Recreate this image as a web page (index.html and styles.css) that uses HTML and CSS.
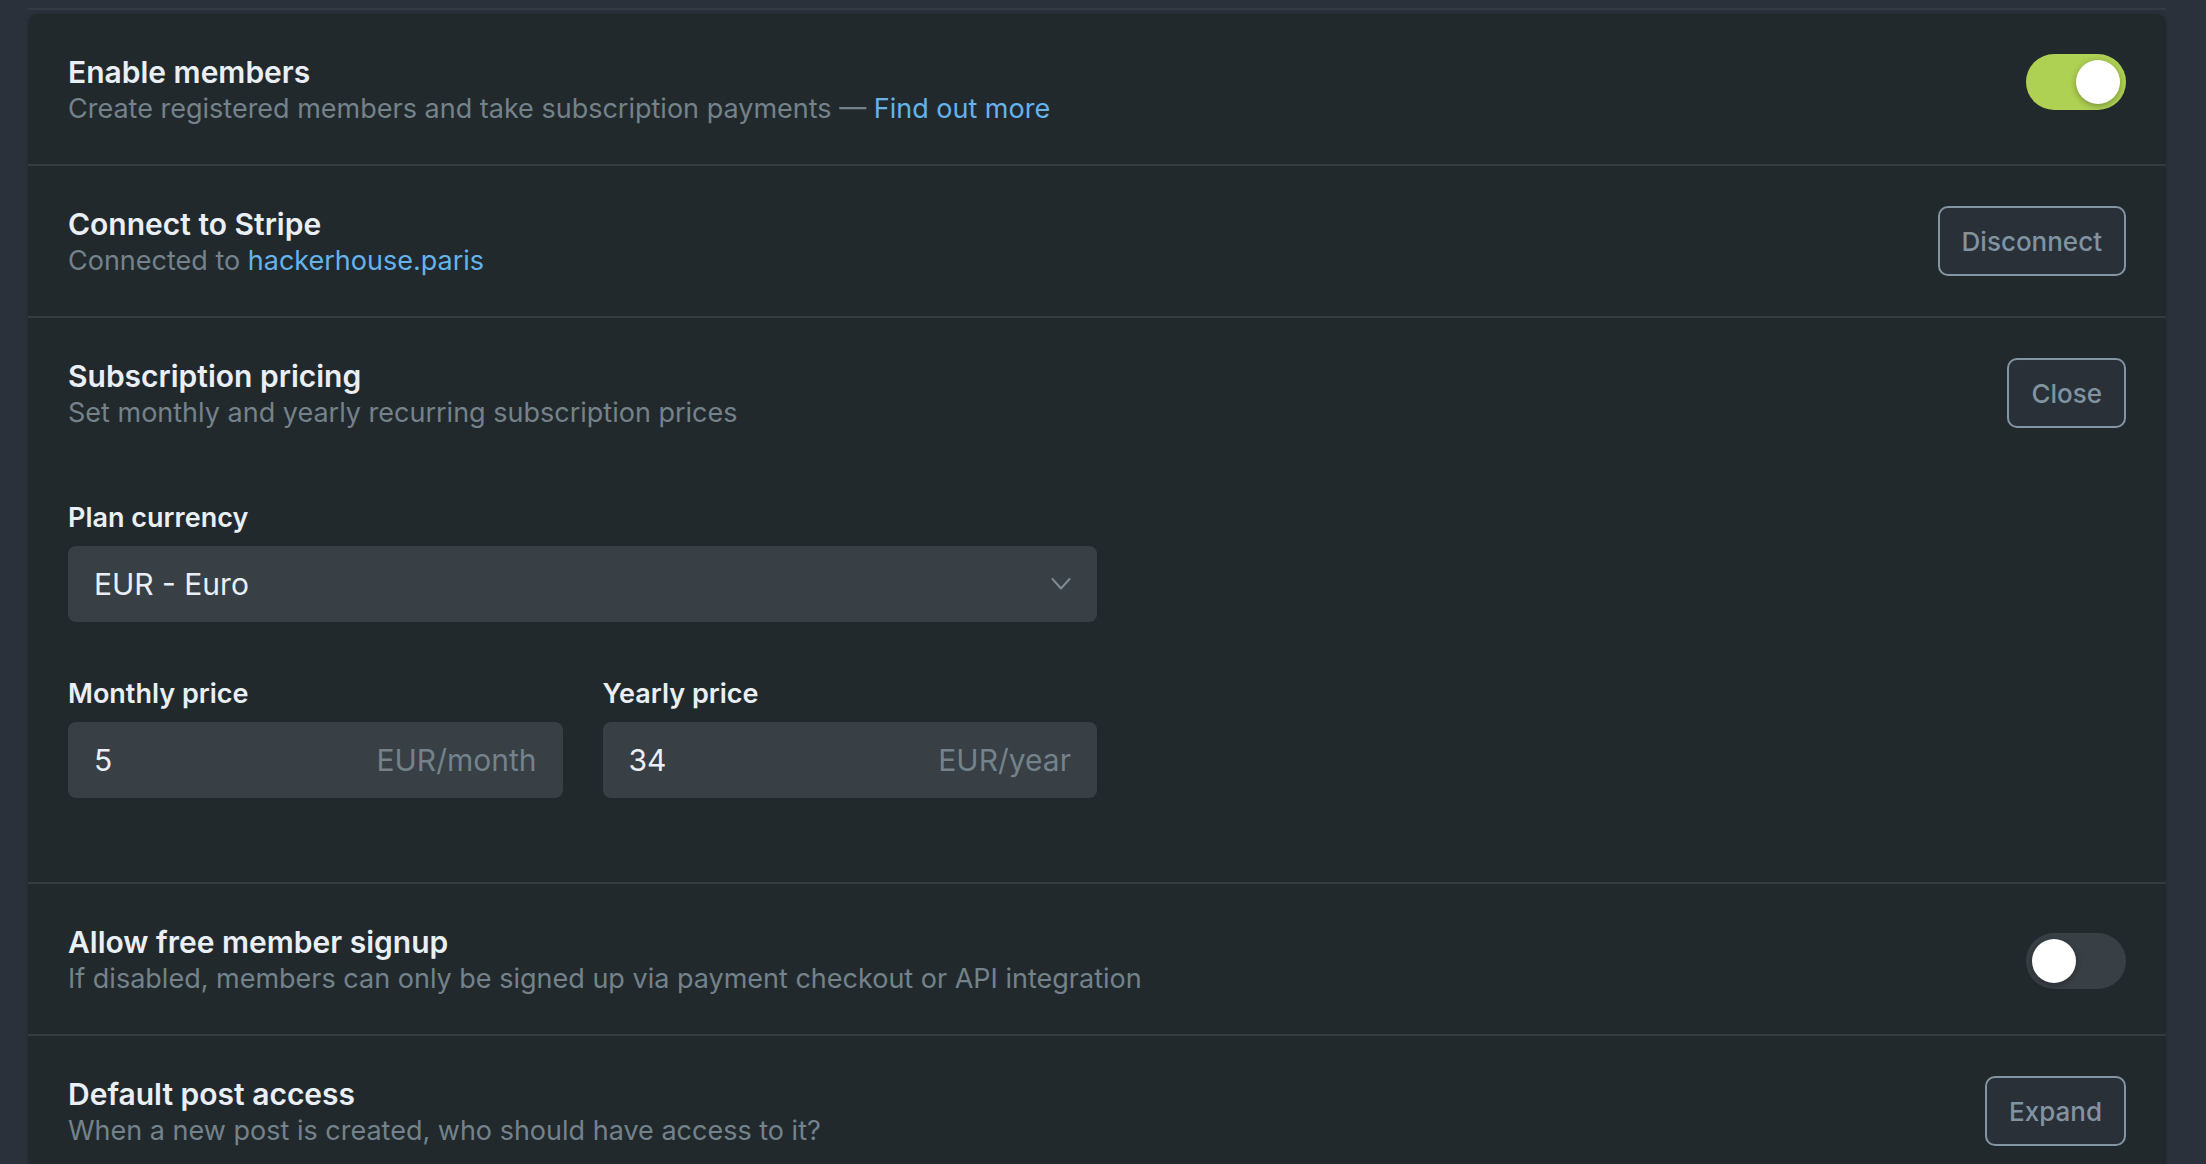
FILE: index.html
```
<!DOCTYPE html>
<html lang="en">
<head>
    <meta charset="UTF-8">
    <meta name="viewport" content="width=device-width, initial-scale=1.0">
    <title>Members settings</title>
    <link rel="stylesheet" href="styles.css">
</head>
<body>
    <main class="settings">
        <section class="panel">
            <div class="row">
                <div class="row-text">
                    <h4 id="membersTitle">Enable members</h4>
                    <p>Create registered members and take subscription payments — <a href="#">Find out more</a></p>
                </div>
                <input type="checkbox" class="switch" aria-labelledby="membersTitle" checked>
            </div>

            <div class="row">
                <div class="row-text">
                    <h4>Connect to Stripe</h4>
                    <p>Connected to <a href="#">hackerhouse.paris</a></p>
                </div>
                <button type="button" class="btn">Disconnect</button>
            </div>

            <!-- expanded section -->
            <div class="row">
                <div class="row-text">
                    <h4>Subscription pricing</h4>
                    <p>Set monthly and yearly recurring subscription prices</p>
                </div>
                <button type="button" class="btn">Close</button>
            </div>
            <form class="pricing">
                <div class="field field-wide">
                    <label for="currency">Plan currency</label>
                    <div class="control">
                        <select id="currency">
                            <option selected>EUR - Euro</option>
                            <option>USD - US Dollar</option>
                            <option>GBP - British Pound</option>
                        </select>
                        <svg class="arrow" viewBox="0 0 20 12" aria-hidden="true">
                            <path d="M1.5 1 10 10.5 18.5 1"/>
                        </svg>
                    </div>
                </div>
                <div class="field">
                    <label for="monthly">Monthly price</label>
                    <div class="control">
                        <input type="text" id="monthly" value="5">
                        <span class="unit">EUR/month</span>
                    </div>
                </div>
                <div class="field">
                    <label for="yearly">Yearly price</label>
                    <div class="control">
                        <input type="text" id="yearly" value="34">
                        <span class="unit">EUR/year</span>
                    </div>
                </div>
            </form>

            <div class="row row-center">
                <div class="row-text">
                    <h4 id="signupTitle">Allow free member signup</h4>
                    <p>If disabled, members can only be signed up via payment checkout or API integration</p>
                </div>
                <input type="checkbox" class="switch" aria-labelledby="signupTitle">
            </div>

            <div class="row">
                <div class="row-text">
                    <h4>Default post access</h4>
                    <p>When a new post is created, who should have access to it?</p>
                </div>
                <button type="button" class="btn">Expand</button>
            </div>
        </section>
    </main>
</body>
</html>
```
FILE: styles.css
```
* {
    box-sizing: border-box;
}

body {
    margin: 0;
    height: 100vh;
    overflow: hidden;
    background-color: #2a313a;
    color: #e9eff5;
    font-family: Inter, "Liberation Sans", sans-serif;
    font-size: 27px;
    line-height: 36px;
}

.settings {
    margin: 8px 40px 0 28px;
    padding-top: 4px;
    border-top: 2px solid #343c43;
}

.panel {
    background-color: #22292c;
    border-radius: 10px;
    box-shadow: 0 0 3px rgba(34, 41, 44, 0.8);
}

.row {
    display: flex;
    justify-content: space-between;
    align-items: flex-start;
    gap: 40px;
    padding: 40px 40px 36px;
}

.row-center {
    align-items: center;
}

.row + .row,
.pricing + .row {
    border-top: 2px solid #343c3f;
}

h4 {
    margin: 0;
    font-size: 30px;
    font-weight: 600;
}

p {
    margin: 0;
    color: #73828b;
    line-height: 38px;
}

a {
    color: #64b3ec;
    text-decoration: none;
}

.btn {
    height: 70px;
    padding: 0 22px;
    border: 2px solid #8395a3;
    border-radius: 10px;
    background-color: #293038;
    color: #8193a0;
    font-family: inherit;
    font-size: 26px;
    font-weight: 500;
    cursor: pointer;
}

.switch {
    appearance: none;
    flex-shrink: 0;
    width: 100px;
    height: 56px;
    margin: 0;
    padding: 6px;
    border-radius: 28px;
    background-color: #383f45;
    cursor: pointer;
}

.switch::before {
    content: "";
    display: block;
    width: 44px;
    height: 44px;
    border-radius: 50%;
    background-color: white;
    box-shadow: 0 2px 6px rgba(0, 0, 0, 0.3);
}

.switch:checked {
    background-color: #aed053;
}

.switch:checked::before {
    margin-left: auto;
}

.pricing {
    display: grid;
    grid-template-columns: repeat(2, minmax(0, 1fr));
    gap: 54px 40px;
    width: 50%;
    padding: 32px 0 84px 40px;
}

.field-wide {
    grid-column: span 2;
}

label {
    display: block;
    margin-bottom: 10px;
    font-weight: 600;
}

.control {
    display: flex;
    align-items: center;
    height: 76px;
    padding-right: 26px;
    border-radius: 8px;
    background-color: #383f45;
}

.control input,
.control select {
    appearance: none;
    flex: 1;
    min-width: 0;
    height: 100%;
    padding: 0 0 0 26px;
    border: none;
    background: none;
    color: #e9eff5;
    font-family: inherit;
    font-size: 30px;
}

.unit {
    color: #73828b;
    font-size: 30px;
}

.arrow {
    width: 20px;
    height: 12px;
    fill: none;
    stroke: #7c8b95;
    stroke-width: 2;
    stroke-linecap: round;
    stroke-linejoin: round;
}
```
